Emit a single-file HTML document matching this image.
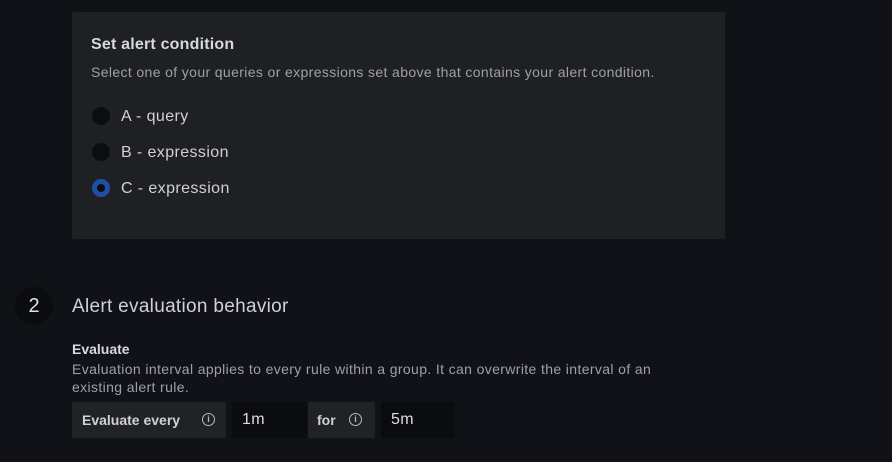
<!DOCTYPE html>
<html><head><style>
body{margin:0;width:892px;height:462px;background:#111217;font-family:"Liberation Sans",sans-serif;color:#ccccdc;position:relative;overflow:hidden}
.a{position:absolute;white-space:nowrap}
.panel{position:absolute;left:72px;top:12px;width:653px;height:227px;background:#1f2023;border-radius:2px}
.r{position:absolute;left:92px;width:18px;height:18px;border-radius:50%;background:#0c0d10;box-sizing:border-box}
.rl{position:absolute;left:121px;font-size:16px;color:#d0d0d8;letter-spacing:0.4px}
.box{position:absolute;top:402px;height:36px;background:#202226;border-radius:2px}
.inp{position:absolute;top:402px;height:36px;background:#0b0c0e;color:#dcdce4;font-size:16px;line-height:36px;padding-left:10px;box-sizing:border-box;letter-spacing:0.4px}
.info{position:absolute;top:413px;width:11px;height:11px;border:1.3px solid #b8b8c4;border-radius:50%;font-size:9px;line-height:11px;text-align:center;color:#b8b8c4;font-weight:bold}
</style></head><body>
<div class="panel"></div>
<div class="a" style="left:91px;top:36px;font-size:16px;font-weight:bold;color:#d8d8e0;letter-spacing:0.2px">Set alert condition</div>
<div class="a" style="left:91px;top:64px;font-size:14px;color:#9fa0a8;letter-spacing:0.37px">Select one of your queries or expressions set above that contains your alert condition.</div>
<div class="r" style="top:107px"></div><div class="rl" style="top:108px">A - query</div>
<div class="r" style="top:143px"></div><div class="rl" style="top:144px">B - expression</div>
<div class="r" style="top:179px;border:5px solid #1f4ea5;background:#0c0d10"></div><div class="rl" style="top:180px">C - expression</div>
<div class="a" style="left:15px;top:287px;width:38px;height:38px;border-radius:50%;background:#0b0c0e;color:#e0e0e8;font-size:20px;line-height:38px;text-align:center">2</div>
<div class="a" style="left:72px;top:296px;font-size:19px;color:#d0d0d8;letter-spacing:0.3px">Alert evaluation behavior</div>
<div class="a" style="left:72px;top:341px;font-size:14px;font-weight:bold;color:#d8d8e0">Evaluate</div>
<div class="a" style="left:72px;top:360px;font-size:14px;line-height:18px;color:#9fa0a8;white-space:normal;width:585px;letter-spacing:0.37px">Evaluation interval applies to every rule within a group. It can overwrite the interval of an existing alert rule.</div>
<div class="box" style="left:72px;width:154px"></div>
<div class="a" style="left:82px;top:412px;font-size:14px;font-weight:bold;color:#d0d0d8">Evaluate every</div>
<div class="info" style="left:202px">i</div>
<div class="inp" style="left:232px;width:75px">1m</div>
<div class="box" style="left:308px;width:67px"></div>
<div class="a" style="left:317px;top:412px;font-size:14px;font-weight:bold;color:#d0d0d8">for</div>
<div class="info" style="left:349px">i</div>
<div class="inp" style="left:381px;width:74px">5m</div>
</body></html>
